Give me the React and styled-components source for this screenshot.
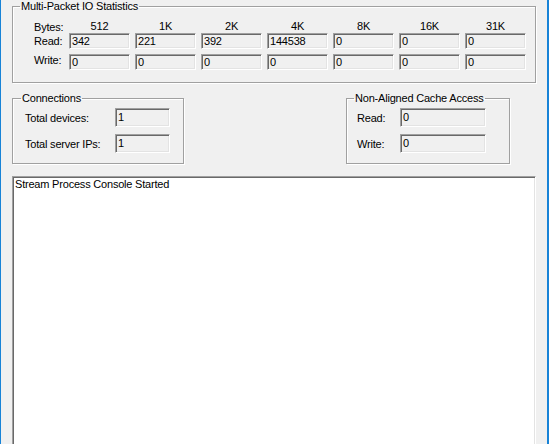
import styled, { createGlobalStyle } from 'styled-components';

const GlobalStyle = createGlobalStyle`
  html, body {
    margin: 0;
    padding: 0;
    background: #f0f0f0;
  }

  body {
    font-family: "Liberation Sans", Arial, sans-serif;
    font-size: 11px;
    letter-spacing: -0.2px;
    color: #000;
  }
`;

const sizes = ['512', '1K', '2K', '4K', '8K', '16K', '31K'];
const reads = ['342', '221', '392', '144538', '0', '0', '0'];
const writes = ['0', '0', '0', '0', '0', '0', '0'];

const App = () => {
  return (
    <>
      <GlobalStyle />
      <Window>
        <Group $w={524}>
          <Legend $ml={7}>Multi-Packet IO Statistics</Legend>
          <IoGrid>
            <Label>Bytes:</Label>
            {sizes.map((s) => (
              <Head key={s}>{s}</Head>
            ))}

            <Label>Read:</Label>
            {reads.map((v, i) => (
              <Field key={'r' + i} $h={16}>
                {v}
              </Field>
            ))}

            <Label>Write:</Label>
            {writes.map((v, i) => (
              <Field key={'w' + i} $h={16}>
                {v}
              </Field>
            ))}
          </IoGrid>
        </Group>

        <Row>
          <Group $w={172}>
            <Legend $ml={8}>Connections</Legend>
            <FormGrid $label={90} $box={55} $pl={12}>
              <Label>Total devices:</Label>
              <Field $h={19}>1</Field>
              <Label>Total server IPs:</Label>
              <Field $h={19}>1</Field>
            </FormGrid>
          </Group>

          <Group $w={164}>
            <Legend $ml={7}>Non-Aligned Cache Access</Legend>
            <FormGrid $label={43} $box={86} $pl={10}>
              <Label>Read:</Label>
              <Field $h={19}>0</Field>
              <Label>Write:</Label>
              <Field $h={19}>0</Field>
            </FormGrid>
          </Group>
        </Row>

        <Console>Stream Process Console Started</Console>
      </Window>
    </>
  );
};

const Window = styled.div`
  width: 549px;
  height: 444px;
  box-sizing: border-box;
  border-left: 1px solid #1883d7;
  border-right: 2px solid #1883d7;
  padding: 0 11px;
  background: #f0f0f0;
  overflow: hidden;
  display: flex;
  flex-direction: column;
`;

const Group = styled.fieldset`
  margin: 0;
  padding: 0;
  min-width: 0;
  width: ${(p) => p.$w}px;
  box-sizing: border-box;
  border: 1px solid #a0a0a0;
  box-shadow: 1px 1px 0 #fff, inset 1px 1px 0 #fff;
`;

const Legend = styled.legend`
  margin-left: ${(p) => p.$ml}px;
  padding: 0 1px;
  line-height: 13px;
  white-space: nowrap;
`;

const IoGrid = styled.div`
  display: grid;
  grid-template-columns: 30px repeat(7, 61px);
  grid-template-rows: 13px 16px 21px;
  column-gap: 5px;
  align-items: end;
  padding: 7px 0 12px 21px;
`;

const Label = styled.div`
  line-height: 16px;
  white-space: nowrap;
  align-self: center;
`;

const Head = styled.div`
  line-height: 13px;
  text-align: center;
`;

const Field = styled.div`
  box-sizing: border-box;
  height: ${(p) => p.$h}px;
  line-height: ${(p) => p.$h - 2}px;
  padding-left: 2px;
  background: #f0f0f0;
  border: 1px solid;
  border-color: #a0a0a0 #fff #fff #a0a0a0;
  box-shadow: inset 1px 1px 0 #696969, inset -1px -1px 0 #e3e3e3;
  white-space: nowrap;
  overflow: hidden;
`;

const Row = styled.div`
  display: flex;
  justify-content: space-between;
  margin-top: 9px;
  padding-right: 26px;
`;

const FormGrid = styled.div`
  display: grid;
  grid-template-columns: ${(p) => p.$label}px ${(p) => p.$box}px;
  grid-auto-rows: 19px;
  row-gap: 7px;
  align-items: center;
  padding: 3px 0 10px ${(p) => p.$pl}px;
`;

const Console = styled.div`
  margin-top: 12px;
  width: 524px;
  height: 300px;
  flex-shrink: 0;
  box-sizing: border-box;
  background: #fff;
  border: 1px solid;
  border-color: #a0a0a0 #fff #fff #a0a0a0;
  box-shadow: inset 1px 1px 0 #696969, inset -1px -1px 0 #e3e3e3;
  padding: 1px 2px;
  line-height: 13px;
`;

export default App;
